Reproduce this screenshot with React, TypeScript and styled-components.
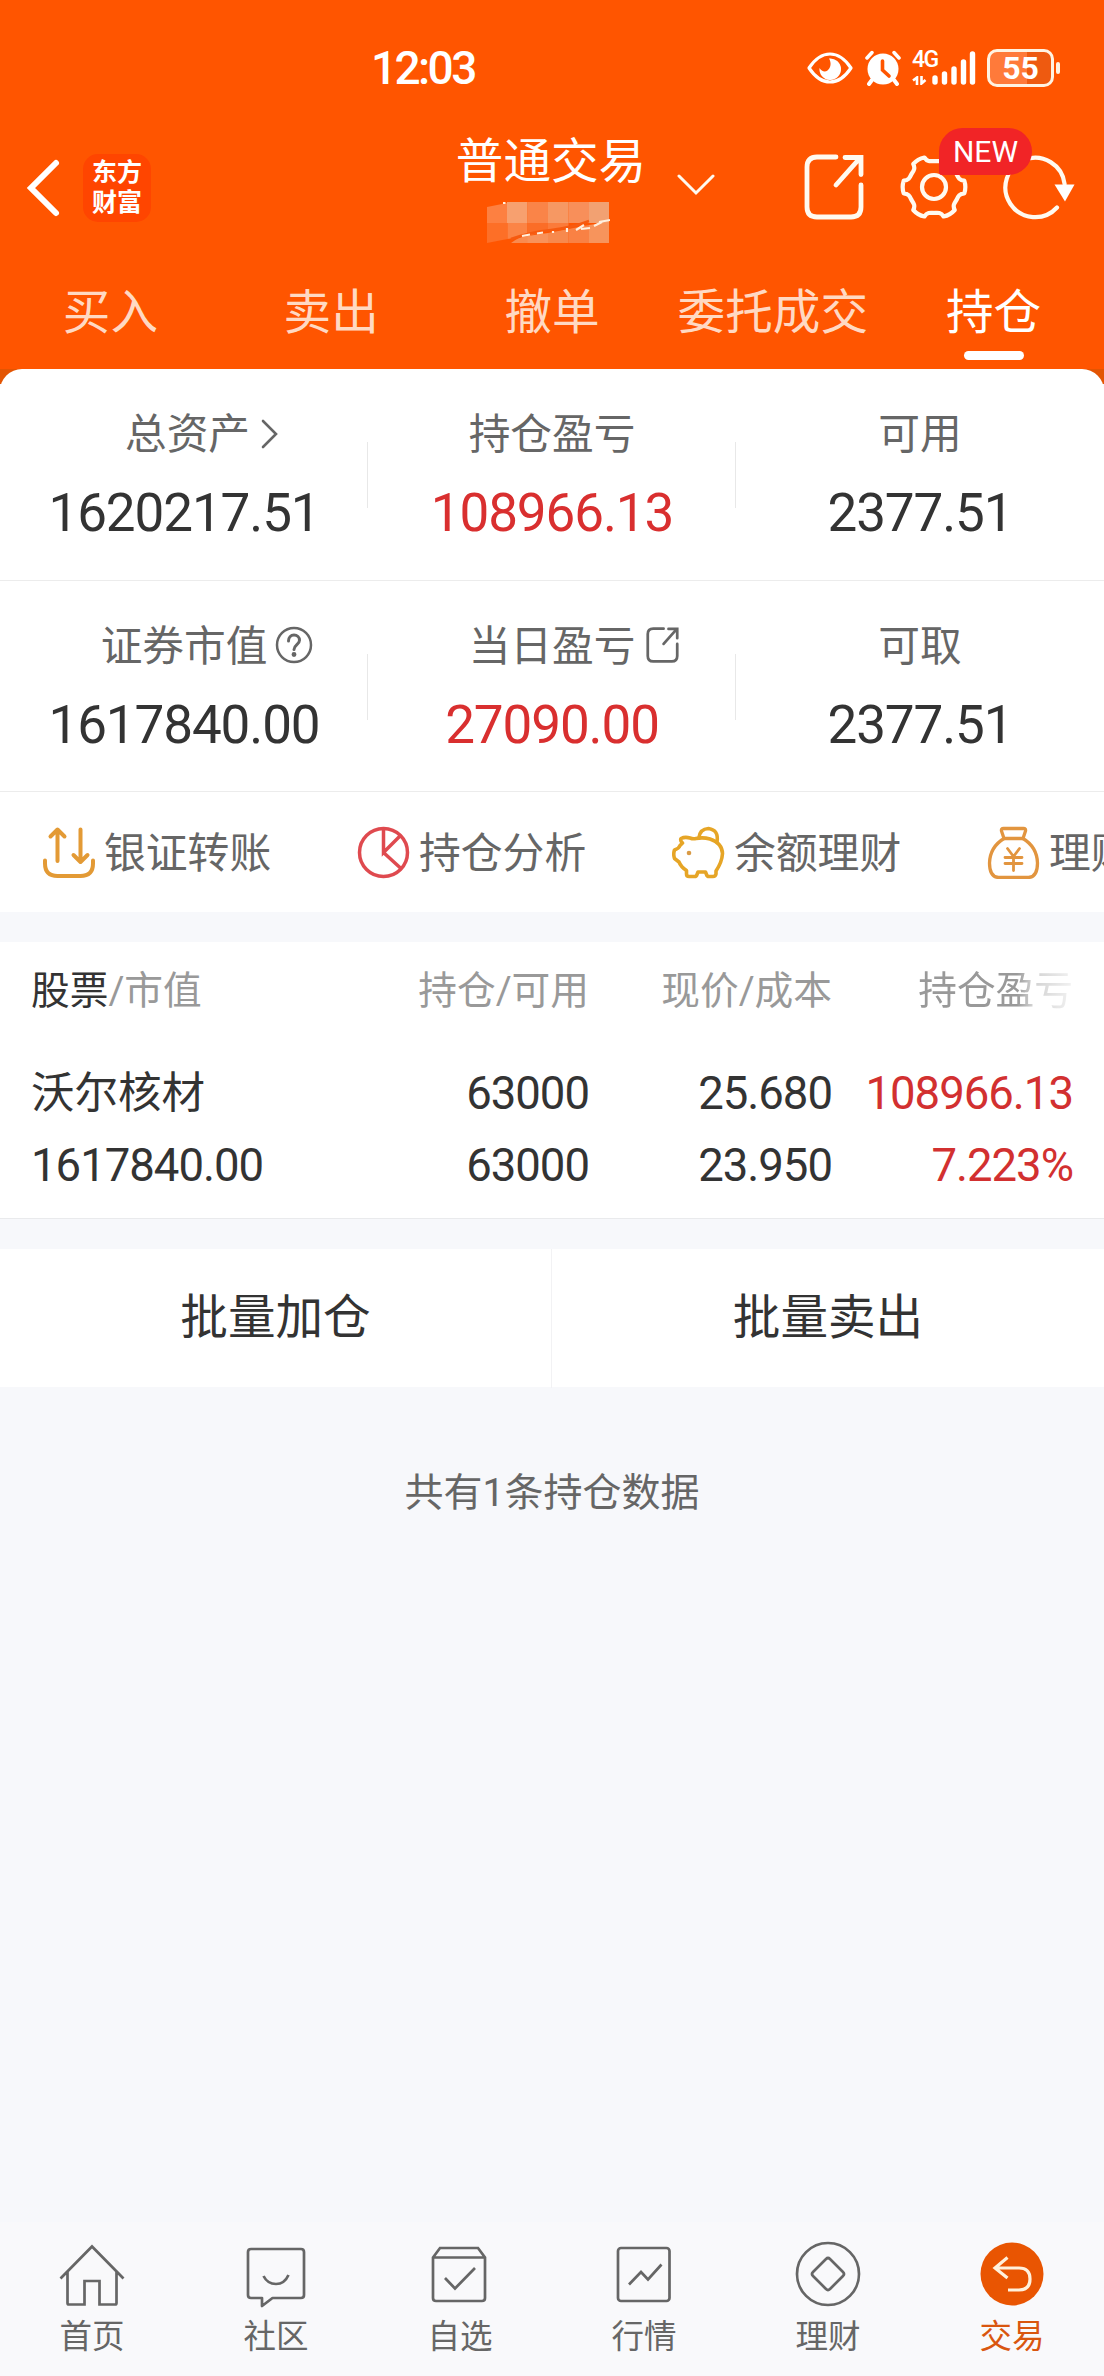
import React from 'react';
import styled, { createGlobalStyle } from 'styled-components';

const GlobalStyle = createGlobalStyle`
  * { box-sizing: border-box; }
  body {
    margin: 0;
    background: #f7f8fb;
    font-family: Roboto, 'Noto Sans CJK SC', sans-serif;
    color: #333;
  }
  svg { display: block; flex: none; }
`;

const Page = styled.div`
  width: 1104px;
  height: 2376px;
  display: flex;
  flex-direction: column;
  overflow: hidden;
`;

/* ---------- header ---------- */

const Header = styled.header`
  flex: none;
  height: 384px;
  background: linear-gradient(#ff5500 0 369px, #e35503 369px);
  color: #fff;
`;

const StatusBar = styled.div`
  height: 100px;
  padding: 35px 44px 0 371px;
  display: flex;
  align-items: center;
`;

const Clock = styled.div`
  flex: 1;
  font-size: 46px;
  font-weight: 500;
  line-height: 65px;
  letter-spacing: -2.6px;
  padding-top: 2px;
`;

const NetworkType = styled.div`
  display: flex;
  flex-direction: column;
  align-items: flex-start;
  gap: 6px;
  width: 20px;
  margin-left: 11px;
  white-space: nowrap;
`;

const NetworkLabel = styled.span`
  font-size: 23px;
  font-weight: 500;
  line-height: 20px;
  letter-spacing: -1.5px;
`;

const Battery = styled.div`
  width: 67px;
  height: 38px;
  margin-left: 11px;
  border: 3px solid #fff3e2;
  border-radius: 10px;
  background: linear-gradient(90deg, #ff7a3a 0 60%, #ee5a10 60%);
  font-size: 32px;
  font-weight: 700;
  line-height: 33px;
  text-align: center;
`;

const BatteryCap = styled.div`
  width: 4px;
  height: 12px;
  margin-left: 2px;
  border-radius: 2px;
  background: #fff3e2;
`;

const NavBar = styled.div`
  height: 170px;
  display: grid;
  grid-template-columns: 456px 190px 1fr;
`;

const NavLeft = styled.div`
  display: flex;
  align-items: center;
  height: 175px;
  padding-left: 24px;
`;

const Brand = styled.div`
  width: 68px;
  height: 68px;
  margin-left: 21px;
  padding-top: 4px;
  border-radius: 15px;
  background: #ff4500;
  font-size: 25px;
  font-weight: 700;
  line-height: 30px;
  text-align: center;
`;

const NavTitle = styled.div`
  display: flex;
  flex-direction: column;
  align-items: center;
  padding-top: 32px;
`;

const Title = styled.div`
  font-size: 47.6px;
  line-height: 60px;
  white-space: nowrap;
`;

const MaskedAccount = styled.svg`
  margin: 10px 6px 0 0;
`;

const NavRight = styled.div`
  display: flex;
  align-items: center;
  height: 174px;
`;

const IconSlot = styled.div<{ $left: number }>`
  position: relative;
  margin-left: ${p => p.$left}px;
`;

const NewBadge = styled.span`
  position: absolute;
  left: 39px;
  top: -25px;
  z-index: 1;
  width: 93px;
  height: 47px;
  border-radius: 24px 24px 24px 3px;
  background: #f12426;
  font-size: 30px;
  line-height: 47px;
  text-align: center;
`;

const Tabs = styled.nav`
  height: 99px;
  display: grid;
  grid-template-columns: repeat(5, 220.8px);
`;

const Tab = styled.div<{ $active?: boolean }>`
  display: flex;
  flex-direction: column;
  align-items: center;
  padding-top: 13px;
  font-size: 47.6px;
  line-height: 60px;
  white-space: nowrap;
  color: ${p => (p.$active ? '#fff' : '#ffd9c3')};
  &::after {
    content: '';
    width: 60px;
    height: 9px;
    margin-top: 8px;
    border-radius: 5px;
    background: ${p => (p.$active ? '#fff' : 'transparent')};
  }
`;

/* ---------- asset summary ---------- */

const Card = styled.section`
  flex: none;
  margin-top: -15px;
  border-radius: 22px 22px 0 0;
  background: #fff;
`;

const SummaryRow = styled.div<{ $height: number }>`
  height: ${p => p.$height}px;
  display: grid;
  grid-template-columns: repeat(3, 368px);
  border-bottom: 1px solid #ececec;
`;

const Metric = styled.div<{ $divided?: boolean }>`
  display: flex;
  flex-direction: column;
  align-items: center;
  gap: 18px;
  padding-top: 36px;
  background: ${p => (p.$divided ? 'linear-gradient(#e8e8e8, #e8e8e8) right 73px / 1px 66px no-repeat' : 'none')};
`;

const MetricLabel = styled.div<{ $indent?: number }>`
  position: relative;
  margin-left: ${p => p.$indent ?? 0}px;
  font-size: 41.7px;
  line-height: 60px;
  color: #666;
`;

const LabelIcon = styled.span<{ $gap: number; $top: number }>`
  position: absolute;
  left: calc(100% + ${p => p.$gap}px);
  top: ${p => p.$top}px;
`;

const MetricValue = styled.div<{ $up?: boolean }>`
  font-size: 53px;
  line-height: 60px;
  letter-spacing: -1.1px;
  color: ${p => (p.$up ? '#d92f2f' : '#333')};
`;

const Shortcuts = styled.div`
  height: 120px;
  display: flex;
  align-items: center;
  padding-left: 42px;
  overflow: hidden;
`;

const Shortcut = styled.div`
  flex: none;
  width: 315px;
  display: flex;
  align-items: center;
  gap: 9px;
  font-size: 41.8px;
  line-height: 60px;
  white-space: nowrap;
  color: #666;
`;

const ShortcutText = styled.span`
  padding-top: 3px;
`;

/* ---------- holdings ---------- */

const Holdings = styled.section`
  flex: none;
  height: 277px;
  margin-top: 30px;
  padding: 19px 31px 0;
  background: #fff;
  border-bottom: 1px solid #e9eaec;
`;

const TableRow = styled.div<{ $gap?: number }>`
  display: grid;
  grid-template-columns: 318px 240px 243px 241px;
  margin-top: ${p => p.$gap ?? 0}px;
  line-height: 60px;
  white-space: nowrap;
`;

const HeadCell = styled.div<{ $faded?: boolean }>`
  font-size: 38.7px;
  color: #999;
  text-align: right;
  &:first-child { text-align: left; }
  ${p => p.$faded && `
    mask-image: linear-gradient(90deg, #000 0 185px, rgba(0,0,0,.45) 200px, rgba(0,0,0,.12) 241px);
  `}
`;

const HeadStrong = styled.span`
  color: #333;
`;

const Cell = styled.div<{ $up?: boolean }>`
  font-size: 45.5px;
  letter-spacing: -1px;
  text-align: right;
  color: ${p => (p.$up ? '#d23030' : '#333')};
  &:first-child { text-align: left; }
`;

const StockName = styled(Cell)`
  font-size: 43.5px;
  letter-spacing: 0;
`;

const Actions = styled.div`
  flex: none;
  height: 138px;
  margin-top: 30px;
  display: grid;
  grid-template-columns: 551px 1fr;
  background: #fff;
`;

const Action = styled.div`
  font-size: 47.6px;
  line-height: 139px;
  text-align: center;
  & + & { border-left: 1px solid #f2f2f4; }
`;

const Note = styled.div`
  flex: 1;
  padding-top: 76px;
  font-size: 39px;
  line-height: 60px;
  text-align: center;
  color: #666;
`;

/* ---------- bottom bar ---------- */

const BottomBar = styled.nav`
  flex: none;
  height: 154px;
  padding-top: 13px;
  display: grid;
  grid-template-columns: repeat(6, 184px);
  background: #f9f9fb;
`;

const BottomItem = styled.div<{ $active?: boolean }>`
  display: flex;
  flex-direction: column;
  align-items: center;
  gap: 6px;
  font-size: 32.5px;
  line-height: 40px;
  color: ${p => (p.$active ? '#d9560f' : '#666')};
`;

/* ---------- icons ---------- */

const CREAM = '#fffaf0';

const gearPath = () => {
  const pt = (r: number, deg: number) => {
    const a = (deg * Math.PI) / 180;
    return `${(34 + r * Math.cos(a)).toFixed(1)} ${(34 + r * Math.sin(a)).toFixed(1)}`;
  };
  let d = `M${pt(31, -12)}`;
  for (let i = 0; i < 6; i++) {
    const a = i * 60;
    d += ` Q${pt(32.4, a)} ${pt(31, a + 12)} C${pt(26, a + 15)} ${pt(26, a + 22)} ${pt(26, a + 30)}`;
    d += ` C${pt(26, a + 38)} ${pt(26, a + 45)} ${pt(31, a + 48)}`;
  }
  return d + 'Z';
};

const EyeIcon = () => (
  <svg width="46" height="34" viewBox="0 0 46 34" fill="none">
    <path d="M2 17C8 8 15 3 23 3s15 5 21 14c-6 9-13 14-21 14S8 26 2 17Z" stroke="#fff" strokeWidth="3.2" strokeLinejoin="round" />
    <path d="M22 7.500a10.800 10.800 0 1 1-9.500 9.500c2 3.500 5.500 4.500 8 2.500 3.500-3 4-8 1.500-12Z" fill="#fff" />
  </svg>
);

const AlarmIcon = () => (
  <svg width="36" height="36" viewBox="0 0 36 36" fill="none" stroke="#fff" strokeLinecap="round">
    <circle cx="18" cy="19" r="15.500" fill="#fff" stroke="none" />
    <path d="M2 8l5-5.500M34 8l-5-5.500" strokeWidth="3.500" />
    <path d="M7 30l-3 4M29 30l3 4" strokeWidth="4" />
    <path d="M17.500 11v9l6.500 6" stroke="#ff5500" strokeWidth="3.600" />
  </svg>
);

const DataArrows = () => (
  <svg width="15" height="9" viewBox="0 0 15 9" fill="none" stroke="#fff" strokeWidth="2.600">
    <path d="M1 4.500l4-3V9M9.500 0v7.500l4-3.500" />
  </svg>
);

const SignalIcon = () => (
  <svg width="44" height="36" viewBox="0 0 44 36" stroke="#fff" strokeWidth="5.400" strokeLinecap="round">
    <path d="M3 28v4M12.500 24v8M22 19v13M31.500 12v20M40.500 4v28" />
  </svg>
);

const BackIcon = () => (
  <svg width="38" height="62" viewBox="0 0 38 62" fill="none">
    <path d="M32 6L7 31l25 25" stroke="#fff" strokeWidth="6" strokeLinecap="round" strokeLinejoin="miter" />
  </svg>
);

const DownIcon = () => (
  <svg width="38" height="26" viewBox="0 0 38 26" fill="none">
    <path d="M2 2l17 17L36 2" stroke={CREAM} strokeWidth="3" strokeLinecap="round" />
  </svg>
);

const ShareIcon = ({ size, height, color, weight }: { size: number; height: number; color: string; weight: number }) => (
  <svg width={size} height={height} viewBox="0 0 60 66" fill="none" stroke={color} strokeWidth={weight} strokeLinecap="round">
    <path d="M32 3H13Q3 3 3 13v40q0 10 10 10h34q10 0 10-10V31" />
    <path d="M32 31L56 4M41 3.500h16v17" />
  </svg>
);

const GearIcon = () => (
  <svg width="68" height="68" viewBox="0 0 68 68" fill="none" stroke={CREAM} strokeWidth="4.200" strokeLinejoin="round">
    <path d={gearPath()} />
    <circle cx="34" cy="34" r="12" />
  </svg>
);

const RefreshIcon = () => (
  <svg width="74" height="68" viewBox="0 0 74 68" fill="none">
    <path d="M55 54.500A29.700 29.700 0 1 1 62.600 31" stroke={CREAM} strokeWidth="4.200" strokeLinecap="round" />
    <path d="M52.500 31.500h20L63 48.500Z" fill="#fff" />
  </svg>
);

const MosaicIcon = () => (
  <MaskedAccount width="123" height="42" viewBox="0 0 123 42">
    <path d="M0 5L20 1v20H0Z" fill="#fd8041" />
    <rect x="20" width="20.500" height="21" fill="#f7a06f" />
    <rect x="40.500" width="20.500" height="21" fill="#fa8448" />
    <rect x="61" width="20.500" height="21" fill="#f69863" />
    <rect x="81.500" width="20.500" height="21" fill="#f88f5a" />
    <rect x="102" width="20" height="21" fill="#f2a172" />
    <path d="M0 21h20.500v16L0 41Z" fill="#fd6f27" />
    <path d="M20.500 21H40.500v12l-20 4Z" fill="#fb8446" />
    <path d="M40.500 21H61v8l-20.500 5Z" fill="#fb6d27" />
    <path d="M61 21h20.500v3.500L61 29Z" fill="#fb7b3a" />
    <path d="M24 41q7-6 17-7v7Z" fill="#f98b50" />
    <path d="M40.500 34L61 31v10H40.500Z" fill="#f8925a" />
    <path d="M61 31l20.500-4v14H61Z" fill="#f7894d" />
    <path d="M81.500 27l20.500-4v18H81.500Z" fill="#f98144" />
    <path d="M102 23l20-3v21h-20Z" fill="#f7945c" />
    <path d="M24 37q20-7 40-9t38-9" fill="none" stroke="#f65a10" strokeWidth="2.500" />
    <path d="M16 1h2.500M35 34l8-1.500M50 31.500l6-1M66 29v2M80 26v4M89 28l8-5M94 27l9-1M107 24l8-4M112 20l11-2" stroke="#fff0df" strokeWidth="2.200" />
  </MaskedAccount>
);

const MoreIcon = () => (
  <svg width="18" height="30" viewBox="0 0 18 30" fill="none">
    <path d="M2 2l13 13L2 28" stroke="#666" strokeWidth="2.600" strokeLinecap="round" />
  </svg>
);

const HelpIcon = () => (
  <svg width="38" height="38" viewBox="0 0 38 38" fill="none" stroke="#666" strokeWidth="2.500" strokeLinecap="round">
    <circle cx="19" cy="19" r="17" />
    <path d="M13.500 15c0-3.500 2.300-6 5.500-6s5.500 2.300 5.500 5.200c0 4.300-5.500 4.500-5.500 9.300" strokeWidth="3" />
    <circle cx="19" cy="28.500" r="1.200" />
  </svg>
);

const TransferIcon = () => (
  <svg width="53" height="53" viewBox="0 0 53 53" fill="none" stroke="#e39a35" strokeWidth="4" strokeLinecap="round" strokeLinejoin="round">
    <path d="M15.500 35V4M8.500 10.500L15.500 3.500l7 7M38.500 3.500v32M31.500 29l7 7 7-7" />
    <path d="M3 34.500v3Q3 50 15.500 50h23Q51 50 51 37.500v-3" />
  </svg>
);

const PieIcon = () => (
  <svg width="53" height="53" viewBox="0 0 53 53" fill="none" stroke="#df4a4f" strokeWidth="3.500">
    <circle cx="26.500" cy="26.500" r="24" />
    <path d="M26.500 2.500v24l17-17M26.500 26.500l17.500 16" />
  </svg>
);

const PigIcon = () => (
  <svg width="53" height="53" viewBox="0 0 53 53" fill="none" stroke="#e6a526" strokeWidth="3.600" strokeLinejoin="round" strokeLinecap="round">
    <path d="M9 12.500Q13 10.500 18 12q3 1.200 6 .500Q31 11 38 13 50 17 50.500 27.500 50 36 44 45v3q-.5 2.500-3 2.500h-4q-2 0-2.500-2L33.500 46h-7.500l-1 2.500q-.5 2-2.500 2H17q-2.500 0-2.500-2.500v-3.500Q9 41 7 36L2.500 32.500q-1.500-4.500 0-8.500 4.500-1.500 5.500-4.500l2.500-2.500Q8 15 9 12.500Z" />
    <path d="M27 11.500Q28 3 36.500 2.500 47 4 45 16" />
    <circle cx="17" cy="27" r="2.300" fill="#d99a45" stroke="none" />
  </svg>
);

const BagIcon = () => (
  <svg width="53" height="53" viewBox="0 0 53 53" fill="none" stroke="#e2953f" strokeWidth="3.300" strokeLinejoin="round" strokeLinecap="round">
    <path d="M17 12.500L14.500 5q-.5-2.500 2-2.500h20q2.500 0 2 2.500L36 12.500Z" />
    <path d="M17 12.500Q3 21 2.500 37q0 14 9 14.500h30q9-.5 9-14.500Q50 21 36 12.500" />
    <path d="M20.500 22.500l6 8 6-8M18 31.500h17M18 37.500h17M26.500 31v13.500" strokeWidth="2.800" />
  </svg>
);

const NavIcon = ({ children }: { children: React.ReactNode }) => (
  <svg width="68" height="76" viewBox="0 0 68 76" fill="none" stroke="#666" strokeWidth="2.700">
    {children}
  </svg>
);

const HomeIcon = () => (
  <NavIcon>
    <path d="M2.500 43.500L34 11.500l31.500 32M9.500 37v31q0 1.500 1.500 1.500h15.500V46h15v23.500H57q1.500 0 1.500-1.500V37" />
  </NavIcon>
);
const ChatIcon = () => (
  <NavIcon>
    <path d="M9 14h50q3 0 3 3v43q0 3-3 3H30.500l-10.500 8v-8H9q-3 0-3-3V17q0-3 3-3Z" strokeLinejoin="round" />
    <path d="M21.500 41q4 8 12.500 8t12.500-9" />
  </NavIcon>
);
const BoxIcon = () => (
  <NavIcon>
    <path d="M7 22.500l7-9.500h38l7 9.500V63q0 3-3 3H10q-3 0-3-3ZM7 22.500h52M19 43l10 10.500L49 33" />
  </NavIcon>
);
const ChartIcon = () => (
  <NavIcon>
    <rect x="8" y="13" width="51.500" height="53" rx="3" />
    <path d="M19 49.500L31 37l7 7.500 13.500-15" />
  </NavIcon>
);
const CoinIcon = () => (
  <NavIcon>
    <circle cx="34" cy="39" r="31" />
    <path d="M32 24q2-2 4 0l13 13q2 2 0 4L36 54q-2 2-4 0L19 41q-2-2 0-4Z" />
  </NavIcon>
);
const TradeIcon = () => (
  <NavIcon>
    <circle cx="34" cy="39" r="31.500" fill="#e95502" stroke="none" />
    <path d="M29.500 22.500L17 33l12.500 10M17 33h24q11 0 11 11t-11 11H30" stroke="#fff1dc" strokeWidth="3.200" />
  </NavIcon>
);

const TABS = ['买入', '卖出', '撤单', '委托成交', '持仓'];

const SHORTCUTS = [
  { icon: <TransferIcon />, text: '银证转账' },
  { icon: <PieIcon />, text: '持仓分析' },
  { icon: <PigIcon />, text: '余额理财' },
  { icon: <BagIcon />, text: '理财' },
];

const BOTTOM = [
  { icon: <HomeIcon />, text: '首页' },
  { icon: <ChatIcon />, text: '社区' },
  { icon: <BoxIcon />, text: '自选' },
  { icon: <ChartIcon />, text: '行情' },
  { icon: <CoinIcon />, text: '理财' },
  { icon: <TradeIcon />, text: '交易', active: true },
];

export default function App() {
  return (
    <Page>
      <GlobalStyle />
      <Header>
        <StatusBar>
          <Clock>12:03</Clock>
          <EyeIcon />
          <IconSlot $left={12}><AlarmIcon /></IconSlot>
          <NetworkType>
            <NetworkLabel>4G</NetworkLabel>
            <DataArrows />
          </NetworkType>
          <SignalIcon />
          <Battery>55</Battery>
          <BatteryCap />
        </StatusBar>
        <NavBar>
          <NavLeft>
            <BackIcon />
            <Brand>东方<br />财富</Brand>
          </NavLeft>
          <NavTitle>
            <Title>普通交易</Title>
            <MosaicIcon />
          </NavTitle>
          <NavRight>
            <IconSlot $left={31}><DownIcon /></IconSlot>
            <IconSlot $left={89}><ShareIcon size={60} height={66} color={CREAM} weight={4.8} /></IconSlot>
            <IconSlot $left={36}>
              <GearIcon />
              <NewBadge>NEW</NewBadge>
            </IconSlot>
            <IconSlot $left={34}><RefreshIcon /></IconSlot>
          </NavRight>
        </NavBar>
        <Tabs>
          {TABS.map(t => <Tab key={t} $active={t === '持仓'}>{t}</Tab>)}
        </Tabs>
      </Header>

      <Card>
        <SummaryRow $height={212}>
          <Metric $divided>
            <MetricLabel $indent={7}>总资产<LabelIcon $gap={11} $top={14}><MoreIcon /></LabelIcon></MetricLabel>
            <MetricValue>1620217.51</MetricValue>
          </Metric>
          <Metric $divided>
            <MetricLabel>持仓盈亏</MetricLabel>
            <MetricValue $up>108966.13</MetricValue>
          </Metric>
          <Metric>
            <MetricLabel>可用</MetricLabel>
            <MetricValue>2377.51</MetricValue>
          </Metric>
        </SummaryRow>
        <SummaryRow $height={211}>
          <Metric $divided>
            <MetricLabel>证券市值<LabelIcon $gap={8} $top={9}><HelpIcon /></LabelIcon></MetricLabel>
            <MetricValue>1617840.00</MetricValue>
          </Metric>
          <Metric $divided>
            <MetricLabel>
              当日盈亏
              <LabelIcon $gap={10} $top={10}><ShareIcon size={35} height={36} color="#666" weight={5} /></LabelIcon>
            </MetricLabel>
            <MetricValue $up>27090.00</MetricValue>
          </Metric>
          <Metric>
            <MetricLabel>可取</MetricLabel>
            <MetricValue>2377.51</MetricValue>
          </Metric>
        </SummaryRow>
        <Shortcuts>
          {SHORTCUTS.map(s => (
            <Shortcut key={s.text}>{s.icon}<ShortcutText>{s.text}</ShortcutText></Shortcut>
          ))}
        </Shortcuts>
      </Card>

      <Holdings>
        <TableRow>
          <HeadCell><HeadStrong>股票</HeadStrong>/市值</HeadCell>
          <HeadCell>持仓/可用</HeadCell>
          <HeadCell>现价/成本</HeadCell>
          <HeadCell $faded>持仓盈亏</HeadCell>
        </TableRow>
        <TableRow $gap={43}>
          <StockName>沃尔核材</StockName>
          <Cell>63000</Cell>
          <Cell>25.680</Cell>
          <Cell $up>108966.13</Cell>
        </TableRow>
        <TableRow $gap={12}>
          <Cell>1617840.00</Cell>
          <Cell>63000</Cell>
          <Cell>23.950</Cell>
          <Cell $up>7.223%</Cell>
        </TableRow>
      </Holdings>

      <Actions>
        <Action>批量加仓</Action>
        <Action>批量卖出</Action>
      </Actions>
      <Note>共有1条持仓数据</Note>

      <BottomBar>
        {BOTTOM.map(b => (
          <BottomItem key={b.text} $active={b.active}>{b.icon}{b.text}</BottomItem>
        ))}
      </BottomBar>
    </Page>
  );
}
